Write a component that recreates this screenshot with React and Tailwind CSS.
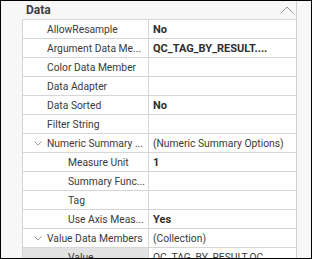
import React from 'react'

const rows = [
  { name: 'AllowResample', value: 'No', bold: true },
  { name: 'Argument Data Me...', value: 'QC_TAG_BY_RESULT....', bold: true },
  { name: 'Color Data Member', value: '' },
  { name: 'Data Adapter', value: '' },
  { name: 'Data Sorted', value: 'No', bold: true },
  { name: 'Filter String', value: '' },
  { name: 'Numeric Summary ...', value: '(Numeric Summary Options)', expand: true },
  { name: 'Measure Unit', value: '1', bold: true, sub: true },
  { name: 'Summary Func...', value: '', sub: true },
  { name: 'Tag', value: '', sub: true },
  { name: 'Use Axis Meas...', value: 'Yes', bold: true, sub: true },
  { name: 'Value Data Members', value: '(Collection)', expand: true },
  { name: 'Value', value: 'QC_TAG_BY_RESULT.QC_...', sub: true, selected: true },
]

const ChevronDown = () => (
  <svg width="8" height="5" viewBox="0 0 8 5" className="absolute left-[11px] top-[7px]">
    <path d="M0.5 0.5 L4 4 L7.5 0.5" fill="none" stroke="#9a9a9a" strokeWidth="1" />
  </svg>
)

const Row = ({ row }) => (
  <div className="flex h-[19px] border-b border-[#d6d6d6]">
    <div
      className={
        'relative w-[126px] shrink-0 border-r border-[#d6d6d6] leading-[19px] whitespace-nowrap overflow-hidden ' +
        (row.sub ? 'pl-[45px] ' : 'pl-[24px] ') +
        (row.selected ? 'bg-[#e2e2e2]' : 'bg-white')
      }
    >
      {row.expand && <ChevronDown />}
      {row.name}
    </div>
    <div
      className={
        'flex-1 bg-white pl-[4px] leading-[19px] whitespace-nowrap overflow-hidden ' +
        (row.bold ? 'font-bold text-[11px] text-[#2e2e2e]' : '')
      }
    >
      {row.value}
    </div>
  </div>
)

export default function App() {
  return (
    <div
      className="w-[312px] h-[259px] border border-black bg-[#f7f7f7] flex overflow-hidden text-[10.3px] text-[#3a3a3a]"
      style={{ fontFamily: 'Roboto, "Liberation Sans", sans-serif' }}
    >
      <div className="w-[295px] shrink-0 flex flex-col">
        {/* category header */}
        <div className="h-[18px] flex items-center justify-between pl-[25px] pr-[2px]">
          <span className="font-bold text-[12px] text-[#3e3e3e]">Data</span>
          <svg width="14" height="8" viewBox="0 0 14 8">
            <path d="M0.5 7.5 L7 1 L13.5 7.5" fill="none" stroke="#9a9a9a" strokeWidth="1" />
          </svg>
        </div>
        <div className="ml-[21px] border-l border-t border-[#d6d6d6]">
          {rows.map((row) => (
            <Row key={row.name} row={row} />
          ))}
        </div>
      </div>
      <div className="flex-1 border-l border-[#d0d0d0]" />
    </div>
  )
}
